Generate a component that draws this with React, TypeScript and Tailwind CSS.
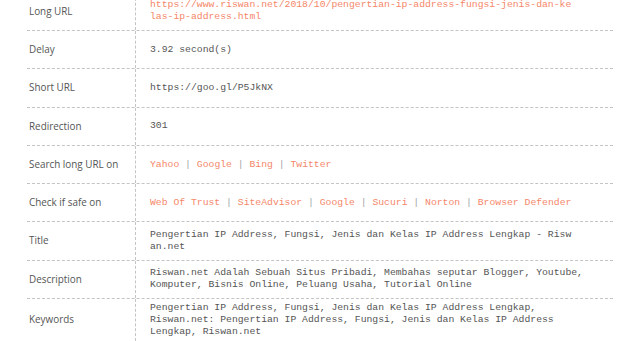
import type { ReactNode } from "react";

type Row = {
  label: string;
  value: ReactNode;
  tight?: boolean;
};

const linkCls = "text-[#f5876a]";

function Links({ items }: { items: string[] }) {
  return (
    <span>
      {items.map((item, i) => (
        <span key={item}>
          {i > 0 && <span className="text-[#a0a4a8]"> | </span>}
          <span className={linkCls}>{item}</span>
        </span>
      ))}
    </span>
  );
}

const rows: Row[] = [
  {
    label: "Long URL",
    value: (
      <span className={`${linkCls} block max-w-[72.5ch] break-all`}>
        https://www.riswan.net/2018/10/pengertian-ip-address-fungsi-jenis-dan-kelas-ip-address.html
      </span>
    ),
  },
  { label: "Delay", value: "3.92 second(s)" },
  { label: "Short URL", value: "https://goo.gl/P5JkNX" },
  { label: "Redirection", value: "301" },
  {
    label: "Search long URL on",
    value: <Links items={["Yahoo", "Google", "Bing", "Twitter"]} />,
  },
  {
    label: "Check if safe on",
    value: (
      <Links
        items={["Web Of Trust", "SiteAdvisor", "Google", "Sucuri", "Norton", "Browser Defender"]}
      />
    ),
  },
  {
    label: "Title",
    value: (
      <span className="block max-w-[72.5ch] break-all">
        Pengertian IP Address, Fungsi, Jenis dan Kelas IP Address Lengkap - Riswan.net
      </span>
    ),
  },
  {
    label: "Description",
    value:
      "Riswan.net Adalah Sebuah Situs Pribadi, Membahas seputar Blogger, Youtube, Komputer, Bisnis Online, Peluang Usaha, Tutorial Online",
  },
  {
    label: "Keywords",
    value:
      "Pengertian IP Address, Fungsi, Jenis dan Kelas IP Address Lengkap, Riswan.net: Pengertian IP Address, Fungsi, Jenis dan Kelas IP Address Lengkap, Riswan.net",
    tight: true,
  },
];

export default function App() {
  return (
    <div className="w-[640px] h-[341px] overflow-hidden bg-white">
      <div className="ml-[27px] w-[586px] -mt-[7.3px]">
        {rows.map((row) => (
          <div key={row.label} className="flex border-b border-dashed border-[#c4c4c4]">
            <div
              className="w-[108px] shrink-0 flex items-center pl-[2px] py-3 text-[9.9px] leading-[13.3px] text-[#555]"
              style={{ fontFamily: '"Open Sans", sans-serif' }}
            >
              {row.label}
            </div>
            <div
              className={`flex-1 flex items-center border-l border-dashed border-[#c4c4c4] pl-[14px] ${
                row.tight ? "py-[3px]" : "py-[6.5px]"
              } text-[9.75px] leading-[12px] text-[#555]`}
              style={{ fontFamily: '"Liberation Mono", "Courier New", monospace' }}
            >
              <div className="max-w-[75.5ch]">{row.value}</div>
            </div>
          </div>
        ))}
      </div>
    </div>
  );
}
